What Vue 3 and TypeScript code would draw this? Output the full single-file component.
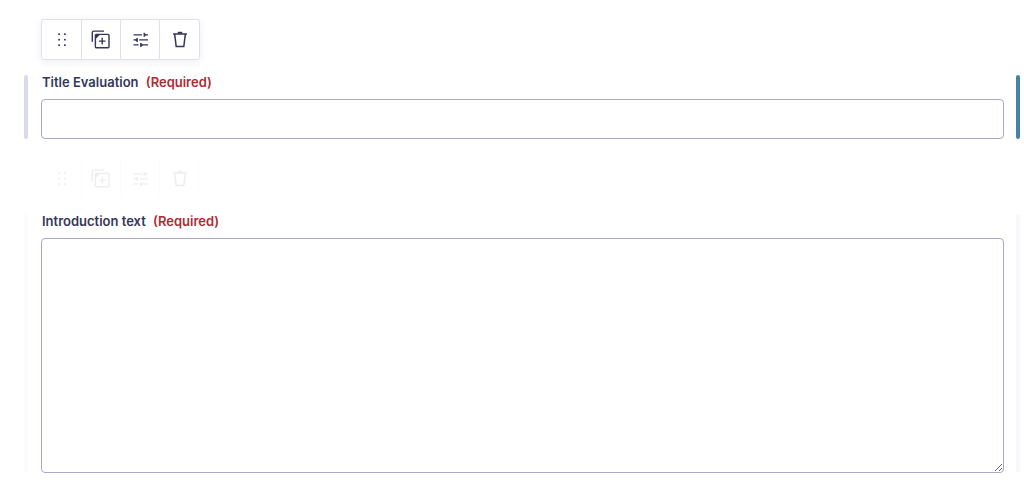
<script setup lang="ts">
interface Field {
  id: string
  label: string
  kind: 'text' | 'textarea'
  active: boolean
}

const fields: Field[] = [
  { id: 'title-evaluation', label: 'Title Evaluation', kind: 'text', active: true },
  { id: 'introduction-text', label: 'Introduction text', kind: 'textarea', active: false },
]

const actions = ['Move', 'Duplicate', 'Settings', 'Delete'] as const
</script>

<template>
  <main class="editor">
    <section v-for="field in fields" :key="field.id" class="field" :class="{ active: field.active }">
      <div class="toolbar" role="toolbar" :aria-label="`${field.label} actions`">
        <button v-for="action in actions" :key="action" type="button" :aria-label="action">
          <svg v-if="action === 'Move'" viewBox="0 0 20 20" fill="currentColor">
            <rect x="6.2" y="3.2" width="1.8" height="1.8" rx=".6" /><rect x="12" y="3.2" width="1.8" height="1.8" rx=".6" />
            <rect x="6.2" y="8.8" width="1.8" height="1.8" rx=".6" /><rect x="12" y="8.8" width="1.8" height="1.8" rx=".6" />
            <rect x="6.2" y="14.2" width="1.8" height="1.8" rx=".6" /><rect x="12" y="14.2" width="1.8" height="1.8" rx=".6" />
          </svg>
          <svg v-else-if="action === 'Duplicate'" viewBox="0 0 20 20" fill="none" stroke="currentColor" stroke-width="1.4">
            <path d="M1.3 11.7V2.4Q1.3 1.1 2.6 1.1H13" />
            <rect x="4.4" y="4.4" width="13.6" height="13.4" rx="1" />
            <path d="M11.2 7.8v6.6M7.9 11.1H14.5" />
            <path d="M4.4 4.4H9.2L4.4 9.2Z" fill="currentColor" stroke="none" />
          </svg>
          <svg v-else-if="action === 'Settings'" viewBox="0 0 20 20" fill="none" stroke="currentColor" stroke-width="1.3">
            <path d="M3.5 4.8h8.5M14.2 4.8H18M3.5 9.9h3M9.2 9.9H18M3.5 14.9h5M10.8 14.9H18" />
            <path d="M14.2 2.8v4M7.2 7.9v4M10.8 12.9v4" />
            <path d="M14.2 3l2.4 1.8-2.4 1.8ZM7.2 8.1L4.8 9.9l2.4 1.8ZM10.8 13.1l2.4 1.8-2.4 1.8Z" fill="currentColor" stroke="none" />
          </svg>
          <svg v-else viewBox="0 0 20 20" fill="none" stroke="currentColor" stroke-width="1.5">
            <path d="M3 4H17M4.7 4.3l1.5 12.2H13.8l1.5-12.2" />
            <path d="M7.6 3.8V3Q7.6 1.8 8.8 1.8h2.4q1.2 0 1.2 1.2V3.8Z" fill="currentColor" stroke="none" />
          </svg>
        </button>
      </div>
      <div class="body">
        <label :for="field.id">{{ field.label }} <span class="required">(Required)</span></label>
        <input v-if="field.kind === 'text'" :id="field.id" type="text" required />
        <textarea v-else :id="field.id" required></textarea>
      </div>
    </section>
    <div class="next" aria-hidden="true"></div>
  </main>
</template>

<style>
body {
  margin: 0;
  background: #fff;
}
</style>

<style scoped>
.editor {
  padding: 19px 4px 0 24px;
  font-family: Inter, "Liberation Sans", sans-serif;
  color: #34375a;
}

.field {
  margin-bottom: 19px;
}

.toolbar {
  display: flex;
  width: max-content;
  margin: 0 0 15px 17px;
  border: 1px solid #dfe0f0;
  border-radius: 3px;
  background: #fff;
  box-shadow: 0 2px 8px rgba(36, 39, 72, 0.08);
  box-sizing: border-box;
}

.toolbar button {
  display: flex;
  align-items: center;
  justify-content: center;
  width: 39px;
  height: 39px;
  padding: 0;
  border: 0;
  background: none;
  color: inherit;
  box-sizing: border-box;
}

.toolbar button:first-child {
  width: 40px;
}

.toolbar button:not(:last-child) {
  border-right: 1px solid #dfe0f0;
}

.toolbar svg {
  flex: none;
  width: 20px;
  height: 20px;
}

.field:not(.active) .toolbar {
  border-color: #eeeef4;
  box-shadow: none;
  opacity: 0.08;
}

.body {
  position: relative;
  padding: 0 16px 0 17px;
}

.body::before,
.body::after {
  content: "";
  position: absolute;
  top: 0;
  bottom: 0;
  width: 4px;
  border-radius: 2px;
  background: #fcfcfd;
}

.body::before {
  left: 0;
}

.body::after {
  right: 0;
  background: #f6f8fb;
}

.active .body::before {
  background: #d9daec;
}

.active .body::after {
  background: #4683a5;
}

label {
  display: block;
  margin-bottom: 10px;
  padding-left: 1px;
  font-size: 13px;
  font-weight: 600;
  line-height: 14px;
}

.required {
  margin-left: 4px;
  color: #b02a33;
}

input,
textarea {
  display: block;
  width: 100%;
  padding: 8px;
  border: 1px solid #a8a8c8;
  border-radius: 4px;
  background: #fff;
  box-sizing: border-box;
  font: inherit;
  box-shadow: none;
}

input {
  height: 40px;
}

textarea {
  height: 235px;
  resize: vertical;
}

.next {
  width: 158px;
  margin: -4px 0 0 17px;
  border-top: 1px solid #fcfcfd;
}
</style>
